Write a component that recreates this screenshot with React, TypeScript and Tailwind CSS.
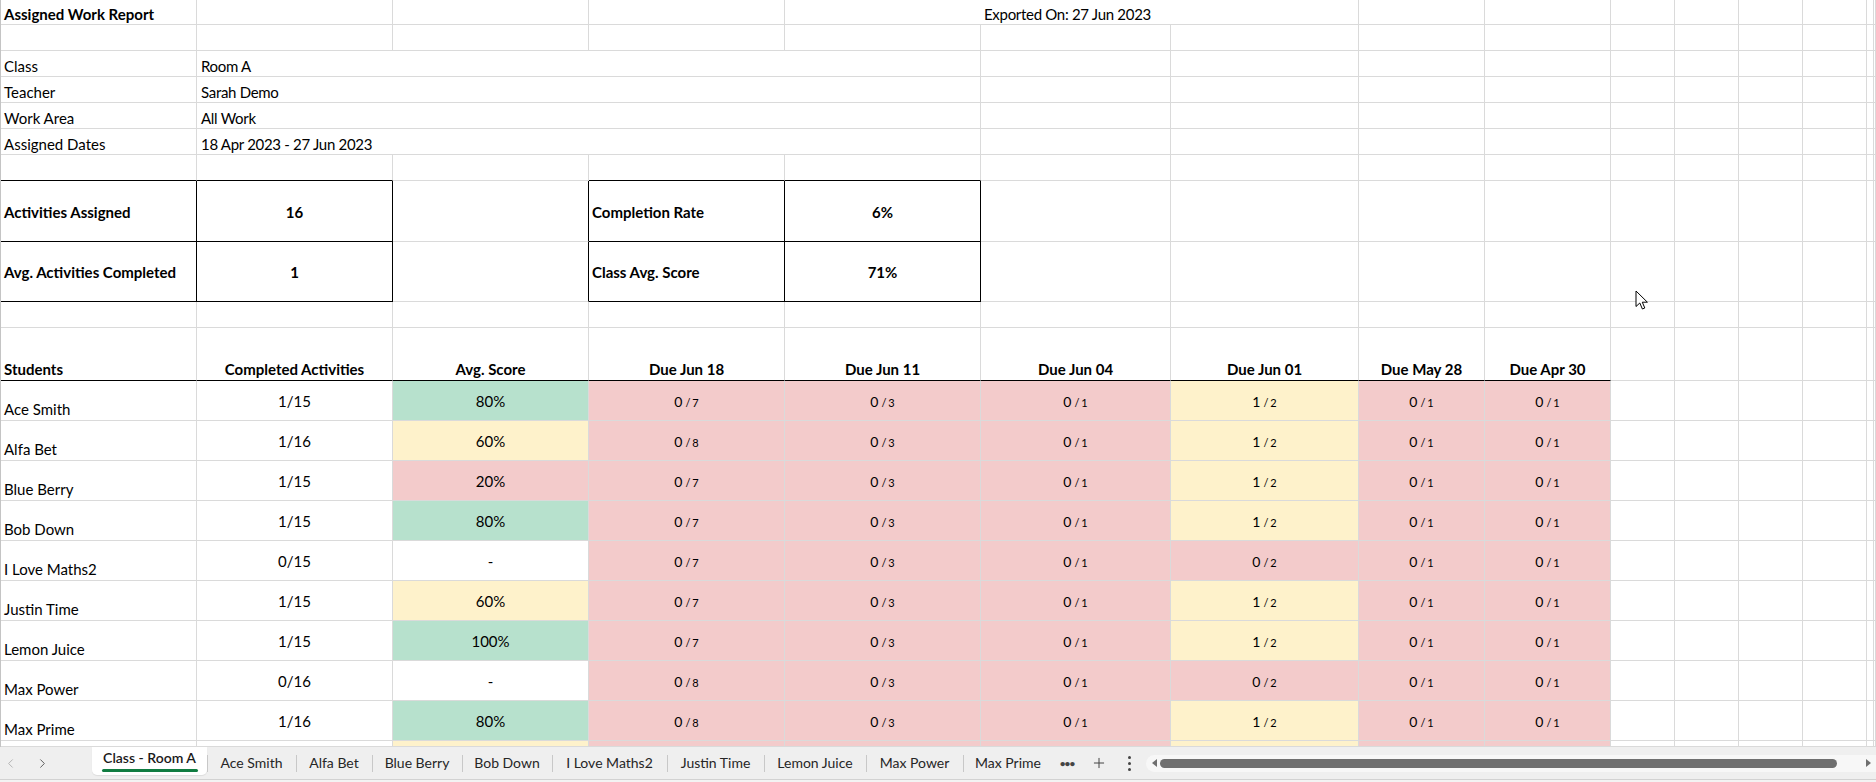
import React from 'react';
import { ChevronLeft, ChevronRight, Plus } from 'lucide-react';

// sheet columns: A..M plus a sliver and the rest of the window
const COLS = 'grid grid-cols-[196px_196px_196px_196px_196px_190px_188px_126px_126px_64px_64px_64px_64px_7px_1fr]';
const GRID = 'border-r border-b border-[#dadada]';

const GREEN = 'bg-[#b7e1cd]';
const YELLOW = 'bg-[#fef2cb]';
const PINK = 'bg-[#f3cbcb]';

type Student = {
  name: string;
  done: string;
  score: string;
  due: [number, number][];
};

const students: Student[] = [
  { name: 'Ace Smith', done: '1/15', score: '80%', due: [[0, 7], [0, 3], [0, 1], [1, 2], [0, 1], [0, 1]] },
  { name: 'Alfa Bet', done: '1/16', score: '60%', due: [[0, 8], [0, 3], [0, 1], [1, 2], [0, 1], [0, 1]] },
  { name: 'Blue Berry', done: '1/15', score: '20%', due: [[0, 7], [0, 3], [0, 1], [1, 2], [0, 1], [0, 1]] },
  { name: 'Bob Down', done: '1/15', score: '80%', due: [[0, 7], [0, 3], [0, 1], [1, 2], [0, 1], [0, 1]] },
  { name: 'I Love Maths2', done: '0/15', score: '-', due: [[0, 7], [0, 3], [0, 1], [0, 2], [0, 1], [0, 1]] },
  { name: 'Justin Time', done: '1/15', score: '60%', due: [[0, 7], [0, 3], [0, 1], [1, 2], [0, 1], [0, 1]] },
  { name: 'Lemon Juice', done: '1/15', score: '100%', due: [[0, 7], [0, 3], [0, 1], [1, 2], [0, 1], [0, 1]] },
  { name: 'Max Power', done: '0/16', score: '-', due: [[0, 8], [0, 3], [0, 1], [0, 2], [0, 1], [0, 1]] },
  { name: 'Max Prime', done: '1/16', score: '80%', due: [[0, 8], [0, 3], [0, 1], [1, 2], [0, 1], [0, 1]] },
];

const headers = ['Due Jun 18', 'Due Jun 11', 'Due Jun 04', 'Due Jun 01', 'Due May 28', 'Due Apr 30'];

const tabs = [
  { label: 'Ace Smith', w: 'w-[89px]' },
  { label: 'Alfa Bet', w: 'w-[76px]' },
  { label: 'Blue Berry', w: 'w-[90px]' },
  { label: 'Bob Down', w: 'w-[90px]' },
  { label: 'I Love Maths2', w: 'w-[115px]' },
  { label: 'Justin Time', w: 'w-[97px]' },
  { label: 'Lemon Juice', w: 'w-[102px]' },
  { label: 'Max Power', w: 'w-[97px]' },
  { label: 'Max Prime', w: 'w-[90px]' },
];

const scoreBg = (s: string) => {
  if (s === '-') return 'bg-white';
  const v = parseInt(s, 10);
  if (v >= 70) return GREEN;
  if (v >= 50) return YELLOW;
  return PINK;
};

const dueBg = (n: number) => (n > 0 ? YELLOW : PINK);

// Blank grid cells, count n
const blanks = (n: number, key: string, extra = '') =>
  Array.from({ length: n }).map((_, i) => <div key={`${key}-${i}`} className={`${GRID} ${extra}`} />);

const Frac: React.FC<{ n: number; d: number }> = ({ n, d }) => (
  <span className="flex items-baseline">
    <span className="text-[14px]">{n}</span>
    <span className="text-[11px] ml-[3px]">/</span>
    <span className="text-[11px] ml-[2px]">{d}</span>
  </span>
);

const Cursor = () => (
  <svg className="absolute left-[1635px] top-[290px]" width="14" height="21" viewBox="0 0 14 21">
    <path d="M1 1 L1 16.5 L4.8 13 L7.4 19 L9.8 18 L7.3 12.2 L12.4 12.2 Z" fill="#fff" stroke="#000" strokeWidth="1" strokeLinejoin="round" />
  </svg>
);

export default function App() {
  return (
    <div className="relative w-[1876px] h-[782px] overflow-hidden bg-white text-black font-['Lato','Liberation_Sans',sans-serif] text-[15px] leading-none">
      <div className="border-l border-[#c4c4c4] h-[747px] overflow-hidden">
        {/* row 1 */}
        <div className={`${COLS} h-[25px]`}>
          <div className={`${GRID} flex items-end pb-[2px] pl-[3px] font-bold whitespace-nowrap`}>Assigned Work Report</div>
          {blanks(3, 'r1a')}
          <div className="border-b border-[#dadada]" />
          <div className="border-b border-[#dadada] flex items-end pb-[2px] pl-[3px] whitespace-nowrap overflow-visible tracking-[-0.3px]">Exported On: 27 Jun 2023</div>
          {blanks(9, 'r1b')}
        </div>
        {/* row 2 */}
        <div className={`${COLS} h-[26px]`}>{blanks(15, 'r2')}</div>
        {/* info rows */}
        {[
          ['Class', 'Room A'],
          ['Teacher', 'Sarah Demo'],
          ['Work Area', 'All Work'],
          ['Assigned Dates', '18 Apr 2023 - 27 Jun 2023'],
        ].map(([k, v]) => (
          <div key={k} className={`${COLS} h-[26px]`}>
            <div className={`${GRID} flex items-end pb-[2px] pl-[3px]`}>{k}</div>
            <div className={`${GRID} col-span-4 flex items-end pb-[2px] pl-[4px] tracking-[-0.3px]`}>{v}</div>
            {blanks(10, k)}
          </div>
        ))}
        {/* row 7 - top edge of the summary boxes */}
        <div className={`${COLS} h-[26px]`}>
          <div className={`${GRID} border-b-black`} />
          <div className={`${GRID} border-b-black`} />
          <div className={GRID} />
          <div className={`${GRID} border-b-black`} />
          <div className={`${GRID} border-b-black`} />
          {blanks(10, 'r7')}
        </div>
        {/* summary boxes */}
        {[
          { h: 'h-[61px]', a: 'Activities Assigned', b: '16', d: 'Completion Rate', e: '6%' },
          { h: 'h-[60px]', a: 'Avg. Activities Completed', b: '1', d: 'Class Avg. Score', e: '71%' },
        ].map((r) => (
          <div key={r.a} className={`${COLS} ${r.h} font-bold`}>
            <div className={`${GRID} border-black flex items-center pl-[3px] pt-[2px]`}>{r.a}</div>
            <div className={`${GRID} border-black flex items-center justify-center pt-[2px]`}>{r.b}</div>
            <div className={`${GRID} border-r-black`} />
            <div className={`${GRID} border-black flex items-center pl-[3px] pt-[2px]`}>{r.d}</div>
            <div className={`${GRID} border-black flex items-center justify-center pt-[2px]`}>{r.e}</div>
            {blanks(10, r.a)}
          </div>
        ))}
        {/* row 10 */}
        <div className={`${COLS} h-[26px]`}>{blanks(15, 'r10')}</div>
        {/* header row */}
        <div className={`${COLS} h-[53px] font-bold`}>
          <div className={`${GRID} border-b-black flex items-end pb-[3px] pl-[3px]`}>Students</div>
          <div className={`${GRID} border-b-black flex items-end justify-center pb-[3px]`}>Completed Activities</div>
          <div className={`${GRID} border-b-black flex items-end justify-center pb-[3px]`}>Avg. Score</div>
          {headers.map((h) => (
            <div key={h} className={`${GRID} border-b-black flex items-end justify-center pb-[3px]`}>{h}</div>
          ))}
          {blanks(6, 'hdr')}
        </div>
        {/* students */}
        {students.map((s) => (
          <div key={s.name} className={`${COLS} h-[40px]`}>
            <div className={`${GRID} flex items-end pb-[3px] pl-[3px]`}>{s.name}</div>
            <div className={`${GRID} flex items-center justify-center pt-[2px]`}>{s.done}</div>
            <div className={`${GRID} ${scoreBg(s.score)} flex items-center justify-center pt-[2px]`}>{s.score}</div>
            {s.due.map(([n, d], i) => (
              <div key={i} className={`${GRID} ${dueBg(n)} flex items-center justify-center pt-[2px]`}>
                <Frac n={n} d={d} />
              </div>
            ))}
            {blanks(6, s.name)}
          </div>
        ))}
        {/* partly visible next row */}
        <div className={`${COLS} h-[6px]`}>
          <div className={GRID} />
          <div className={GRID} />
          <div className={`${GRID} ${YELLOW}`} />
          <div className={`${GRID} ${PINK}`} />
          <div className={`${GRID} ${PINK}`} />
          <div className={`${GRID} ${PINK}`} />
          <div className={`${GRID} ${YELLOW}`} />
          <div className={`${GRID} ${PINK}`} />
          <div className={`${GRID} ${PINK}`} />
          {blanks(6, 'last')}
        </div>
      </div>

      {/* sheet tabs */}
      <div className="h-[33px] bg-[#efefef] border-b border-[#d2d2d2] flex items-stretch text-[14px] text-[#262626] font-['Lato','Liberation_Sans',sans-serif]">
        <div className="w-[92px] flex items-center pl-[3px] gap-[17px]">
          <ChevronLeft size={15} strokeWidth={1.5} className="text-[#b0b0b0]" />
          <ChevronRight size={15} strokeWidth={1.5} className="text-[#555]" />
        </div>
        <div className="w-[115px] h-[28px] bg-white rounded-b-[5px] flex flex-col items-center justify-center shadow-[0_1px_1px_rgba(0,0,0,0.08)]">
          <span className="font-semibold text-[#1a1a1a] pt-[1px]">Class - Room A</span>
          <span className="mt-[4px] h-[3px] w-[96px] bg-[#107c41] rounded-full" />
        </div>
        {tabs.map((t) => (
          <div key={t.label} className={`${t.w} relative flex items-center justify-center`}>
            <span className="absolute left-0 top-[8px] h-[17px] w-px bg-[#c8c8c8]" />
            {t.label}
          </div>
        ))}
        <div className="w-[28px] flex items-center justify-center text-[#444] text-[10px] tracking-[-1px] font-bold">•••</div>
        <div className="w-[36px] flex items-center justify-center text-[#444]">
          <Plus size={16} strokeWidth={1.5} />
        </div>
        <div className="w-[24px] flex flex-col items-center justify-center gap-[3px]">
          <span className="w-[3px] h-[3px] rounded-full bg-[#444]" />
          <span className="w-[3px] h-[3px] rounded-full bg-[#444]" />
          <span className="w-[3px] h-[3px] rounded-full bg-[#444]" />
        </div>
        <div className="flex-1 flex items-center ml-[5px]">
          <div className="flex-1 h-[17px] bg-[#f7f7f7] rounded-l-full flex items-center pl-[6px] pr-[5px] gap-[3px]">
            <span className="w-0 h-0 border-y-[4px] border-y-transparent border-r-[5px] border-r-[#6f6f6f]" />
            <span className="flex-1 h-[9px] rounded-full bg-[#6f6f6f] mr-[26px]" />
            <span className="w-0 h-0 border-y-[4px] border-y-transparent border-l-[5px] border-l-[#6f6f6f]" />
          </div>
        </div>
      </div>
      <div className="h-[2px] bg-[#f3f3f3]" />

      <Cursor />
    </div>
  );
}
